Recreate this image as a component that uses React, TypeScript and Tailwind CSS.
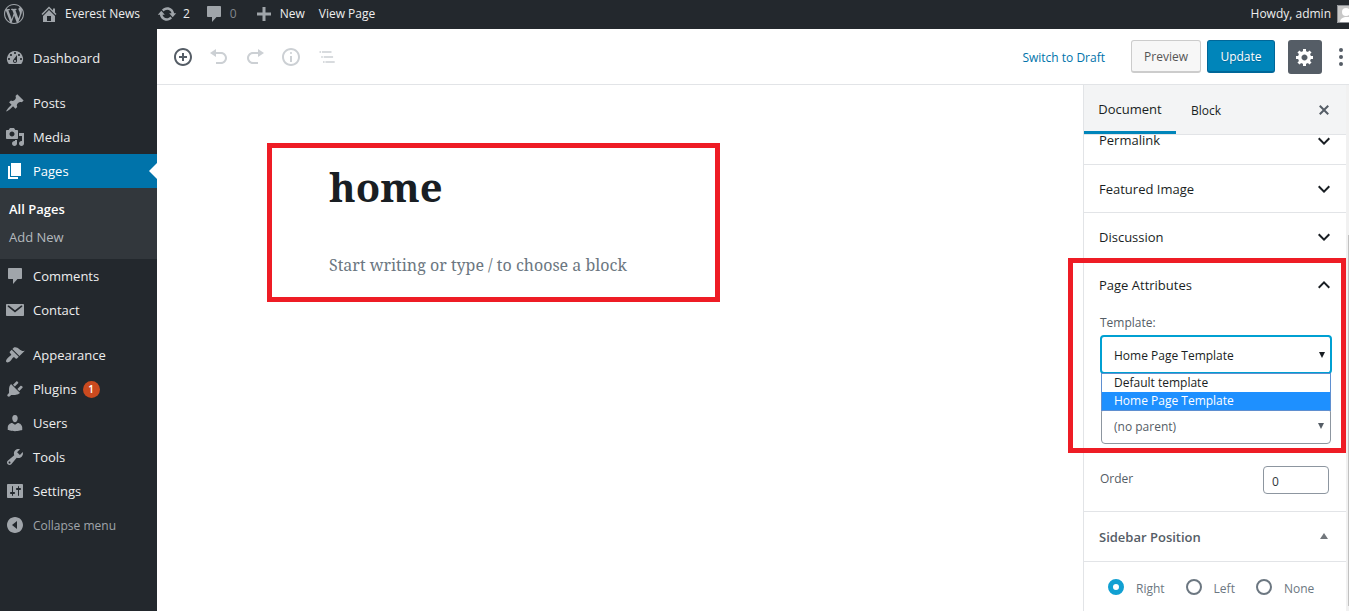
import type { ReactNode } from "react";
import clsx from "clsx";

const icons = {
  wordpress:
    "M20 10c0-5.51-4.49-10-10-10C4.48 0 0 4.49 0 10c0 5.52 4.48 10 10 10 5.51 0 10-4.48 10-10zM7.78 15.37L4.37 6.22c.55-.02 1.17-.08 1.17-.08.5-.06.44-1.13-.06-1.11 0 0-1.45.11-2.37.11-.18 0-.37 0-.58-.01C4.12 2.69 6.87 1.11 10 1.11c2.33 0 4.45.87 6.05 2.34-.68-.11-1.65.39-1.65 1.58 0 .74.45 1.36.9 2.1.35.61.55 1.36.55 2.46 0 1.49-1.4 5-1.4 5l-3.03-8.37c.54-.02.82-.17.82-.17.5-.05.44-1.25-.06-1.22 0 0-1.44.12-2.38.12-.87 0-2.33-.12-2.33-.12-.5-.03-.56 1.2-.06 1.22l.92.08 1.26 3.41zM17.41 10c.24-.64.74-1.87.43-4.25.7 1.29 1.05 2.71 1.05 4.25 0 3.29-1.73 6.24-4.4 7.78.97-2.59 1.94-5.2 2.92-7.78zM6.1 18.09C3.12 16.65 1.11 13.53 1.11 10c0-1.3.23-2.48.72-3.59C3.25 10.3 4.67 14.2 6.1 18.09zm4.03-6.63l2.58 6.98c-.86.29-1.76.45-2.71.45-.79 0-1.57-.11-2.29-.33.81-2.38 1.62-4.74 2.42-7.1z",
  home: "M16 8.5l1.53 1.53-1.06 1.06L10 4.6l-6.47 6.49-1.06-1.06L10 2.5l4 4v-2h2v4zm-6-2.46l6 5.99V18H4v-5.97zM12 17v-5H8v5h4z",
  update:
    "M10.2 3.28c3.53 0 6.43 2.61 6.92 6h2.08l-3.5 4-3.5-4h2.32c-.45-1.97-2.21-3.45-4.32-3.45-1.45 0-2.73.71-3.54 1.78L4.95 5.66C6.23 4.2 8.11 3.28 10.2 3.28zm-.4 13.44c-3.52 0-6.43-2.61-6.92-6H.8l3.5-4c1.17 1.33 2.33 2.67 3.5 4H5.48c.45 1.97 2.21 3.45 4.32 3.45 1.45 0 2.73-.71 3.54-1.78l1.71 1.95c-1.28 1.46-3.15 2.38-5.25 2.38z",
  comments:
    "M4 2h12c.55 0 1 .45 1 1v9c0 .55-.45 1-1 1h-3.5L8 18v-5H4c-.55 0-1-.45-1-1V3c0-.55.45-1 1-1z",
  plus: "M17 8.5v3h-5.5V17h-3v-5.5H3v-3h5.5V3h3v5.5H17z",
  dashboard:
    "M3.76 16h12.48A7.998 7.998 0 0 0 10 3a7.998 7.998 0 0 0-6.24 13zM10 4c.55 0 1 .45 1 1s-.45 1-1 1-1-.45-1-1 .45-1 1-1zM6 6c.55 0 1 .45 1 1s-.45 1-1 1-1-.45-1-1 .45-1 1-1zm8 0c.55 0 1 .45 1 1s-.45 1-1 1-1-.45-1-1 .45-1 1-1zm-5.37 5.55L12 7v6c0 1.1-.9 2-2 2s-2-.9-2-2c0-.57.24-1.08.63-1.45zM4 10c.55 0 1 .45 1 1s-.45 1-1 1-1-.45-1-1 .45-1 1-1zm12 0c.55 0 1 .45 1 1s-.45 1-1 1-1-.45-1-1 .45-1 1-1zm-5 3c0-.55-.45-1-1-1s-1 .45-1 1 .45 1 1 1 1-.45 1-1z",
  post: "M10.44 3.02l1.82-1.82 6.36 6.35-1.83 1.82c-1.05-.68-2.48-.57-3.41.36l-.75.75c-.92.93-1.04 2.35-.35 3.41l-1.83 1.82-2.41-2.41-2.8 2.79c-.42.42-3.38 2.71-3.8 2.29s1.86-3.39 2.28-3.81l2.79-2.79L4.1 9.36l1.83-1.82c1.05.69 2.48.57 3.4-.36l.75-.75c.93-.92 1.05-2.35.36-3.41z",
  media:
    "M13 11V4c0-.55-.45-1-1-1h-1.67L9 1H5L3.67 3H2c-.55 0-1 .45-1 1v7c0 .55.45 1 1 1h10c.55 0 1-.45 1-1zM7 4.5c1.38 0 2.5 1.12 2.5 2.5S8.38 9.5 7 9.5 4.5 8.38 4.5 7 5.62 4.5 7 4.5zM14 6h5v10.5c0 1.38-1.12 2.5-2.5 2.5S14 17.88 14 16.5s1.12-2.5 2.5-2.5c.17 0 .34.02.5.05V9h-3V6zm-4 8.05V13h2v3.5c0 1.38-1.12 2.5-2.5 2.5S7 17.88 7 16.5 8.12 14 9.5 14c.17 0 .34.02.5.05z",
  page: "M6 15V2h10v13H6zm-1 1h8v2H3V5h2v11z",
  email:
    "M2 4h16c.55 0 1 .45 1 1v10c0 .55-.45 1-1 1H2c-.55 0-1-.45-1-1V5c0-.55.45-1 1-1zm8 8.6l7.1-5.9c.3-.3.4-.7.1-1-.3-.4-.8-.4-1.1-.1L10 10.2 3.9 5.6c-.3-.3-.8-.3-1.1.1-.3.3-.2.7.1 1z",
  appearance:
    "M14.48 11.06L7.41 3.99l1.5-1.5c.5-.56 2.3-.47 3.51.32 1.21.8 1.43 1.28 2.91 2.1 1.18.64 2.45 1.26 4.45.85zm-.71.71L6.7 4.7 4.93 6.47c-.39.39-.39 1.02 0 1.41l1.06 1.06c.39.39.39 1.03 0 1.42-.6.6-1.43 1.11-2.21 1.69-.35.26-.7.53-1.01.84C1.43 14.23.4 16.08 1.4 17.07c.99 1 2.84-.03 4.18-1.36.31-.31.58-.66.85-1.02.57-.78 1.08-1.61 1.69-2.21.39-.39 1.02-.39 1.41 0l1.06 1.06c.39.39 1.02.39 1.41 0z",
  plugins:
    "M13.11 4.36L9.87 7.6 8 5.73l3.24-3.24c.35-.34 1.05-.2 1.56.32.52.51.66 1.21.31 1.55zm-8 1.77l.91-1.12 9.01 9.01-1.19.84c-.71.71-2.63 1.16-3.82 1.16H6.14L4.9 17.26c-.59.59-1.54.59-2.12 0-.59-.58-.59-1.53 0-2.12l1.24-1.24v-3.88c0-1.13.4-3.19 1.09-3.89zm7.26 3.97l3.24-3.24c.34-.35 1.04-.21 1.55.31.52.51.66 1.21.31 1.55l-3.24 3.25z",
  users:
    "M10 9.25c-2.27 0-2.73-3.44-2.73-3.44C7 4.02 7.82 2 9.97 2c2.16 0 2.98 2.02 2.71 3.81 0 0-.41 3.44-2.68 3.44zm0 2.57L12.72 10c2.39 0 4.52 2.33 4.52 4.53v2.49s-3.65 1.13-7.24 1.13c-3.65 0-7.24-1.13-7.24-1.13v-2.49c0-2.25 1.94-4.48 4.47-4.48z",
  tools:
    "M16.68 9.77c-1.34 1.34-3.3 1.67-4.95.99l-5.41 6.52c-.99.99-2.59.99-3.58 0s-.99-2.59 0-3.57l6.52-5.42c-.68-1.65-.35-3.61.99-4.95 1.28-1.28 3.12-1.62 4.72-1.06l-2.89 2.89 2.82 2.82 2.86-2.87c.53 1.58.18 3.39-1.08 4.65zM3.81 16.21c.4.39 1.04.39 1.43 0 .4-.4.4-1.04 0-1.43-.39-.4-1.03-.4-1.43 0-.39.39-.39 1.03 0 1.43z",
  settings:
    "M18 16V4c0-.55-.45-1-1-1H3c-.55 0-1 .45-1 1v12c0 .55.45 1 1 1h14c.55 0 1-.45 1-1zM8 11h1c.55 0 1 .45 1 1s-.45 1-1 1H8v1.5c0 .28-.22.5-.5.5s-.5-.22-.5-.5V13H6c-.55 0-1-.45-1-1s.45-1 1-1h1V5.5c0-.28.22-.5.5-.5s.5.22.5.5V11zm5-2h-1c-.55 0-1-.45-1-1s.45-1 1-1h1V5.5c0-.28.22-.5.5-.5s.5.22.5.5V7h1c.55 0 1 .45 1 1s-.45 1-1 1h-1v5.5c0 .28-.22.5-.5.5s-.5-.22-.5-.5V9z",
  collapse: "M10 2c4.42 0 8 3.58 8 8s-3.58 8-8 8-8-3.58-8-8 3.58-8 8-8zm2 12V6l-5 4z",
  insert:
    "M10 1c-5 0-9 4-9 9s4 9 9 9 9-4 9-9-4-9-9-9zm0 16c-3.9 0-7-3.1-7-7s3.1-7 7-7 7 3.1 7 7-3.1 7-7 7zm1-11H9v3H6v2h3v3h2v-3h3V9h-3V6z",
  undo: "M12 5H7V2L1 6l6 4V7h5c2.2 0 4 1.8 4 4s-1.8 4-4 4H7v2h5c3.3 0 6-2.7 6-6s-2.7-6-6-6z",
  redo: "M8 5h5V2l6 4-6 4V7H8c-2.2 0-4 1.8-4 4s1.8 4 4 4h5v2H8c-3.3 0-6-2.7-6-6s2.7-6 6-6z",
  info: "M9 15h2V9H9v6zm1-10c-.5 0-1 .5-1 1s.5 1 1 1 1-.5 1-1-.5-1-1-1zm0-4c-5 0-9 4-9 9s4 9 9 9 9-4 9-9-4-9-9-9zm0 16c-3.9 0-7-3.1-7-7s3.1-7 7-7 7 3.1 7 7-3.1 7-7 7z",
  outline:
    "M2.5 4.2h1.6v1.6H2.5zM5 4.2h9.5v1.6H5zM4.2 9.2h1.6v1.6H4.2zM6.7 9.2h9.4v1.6H6.7zM6 14.2h1.6v1.6H6zM8.4 14.2h9.3v1.6H8.4z",
  gear: "M18 12h-2.18c-.17.7-.44 1.35-.81 1.93l1.54 1.54-2.1 2.1-1.54-1.54c-.58.36-1.23.63-1.91.79V19H8v-2.18c-.68-.16-1.33-.43-1.91-.79l-1.54 1.54-2.12-2.12 1.54-1.54c-.36-.58-.63-1.23-.79-1.91H1V9.03h2.17c.16-.7.44-1.35.8-1.94L2.43 5.55l2.1-2.1 1.54 1.54c.58-.37 1.24-.64 1.93-.81V2h3v2.18c.68.16 1.33.43 1.91.79l1.54-1.54 2.12 2.12-1.54 1.54c.36.59.64 1.24.8 1.94H18V12zm-8.5 1.5c1.66 0 3-1.34 3-3s-1.34-3-3-3-3 1.34-3 3 1.34 3 3 3z",
  close:
    "M14.95 6.46L11.41 10l3.54 3.54-1.41 1.41L10 11.42l-3.53 3.53-1.42-1.42L8.58 10 5.05 6.47l1.42-1.42L10 8.58l3.54-3.53z",
  chevronDown: "M5.41 6.59L10 11.17l4.59-4.58L16 8l-6 6-6-6z",
  chevronUp: "M10 6l-6 6 1.41 1.41L10 8.83l4.59 4.58L16 12z",
};

type IconName = keyof typeof icons;

function Icon({ name, className = "" }: { name: IconName; className?: string }) {
  return (
    <svg
      viewBox="0 0 20 20"
      fill="currentColor"
      fillRule="evenodd"
      className={`size-5 shrink-0 ${className}`.trim()}
      aria-hidden
    >
      <path d={icons[name]} />
    </svg>
  );
}

function AdminBar() {
  return (
    <header className="flex h-[29px] items-center overflow-hidden bg-[#23282d] pb-[2px] pl-1 text-[12px] text-[#eee]">
      <a href="#about" aria-label="About WordPress" className="text-[#a0a5aa]">
        <Icon name="wordpress" />
      </a>
      <a href="#site" className="ml-[15px] flex items-center gap-[6px]">
        <Icon name="home" className="text-[#a0a5aa]" />
        Everest News
      </a>
      <a href="#updates" className="ml-[17px] flex items-center gap-[6px]">
        <Icon name="update" className="text-[#a0a5aa]" />2
      </a>
      <a href="#comments" className="ml-[14px] flex items-center gap-[6px] text-[#82878c]">
        <Icon name="comments" className="text-[#a0a5aa]" />0
      </a>
      <a href="#new" className="ml-[17px] flex items-center gap-[6px]">
        <Icon name="plus" className="text-[#a0a5aa]" />
        New
      </a>
      <a href="#view" className="ml-[14px]">
        View Page
      </a>
      <a href="#profile" className="ml-auto flex items-center gap-[6px]">
        Howdy, admin
        <svg viewBox="0 0 12 18" className="h-[18px] w-3" aria-hidden>
          <path fill="#c8c8c8" d="M0 0h12v18H0z" />
          <path fill="none" stroke="#8c8f94" d="M12 .5H.5v17H12" />
          <circle cx="9" cy="7" r="4" fill="#fff" />
          <path fill="#fff" d="M3 17c0-3 2-4 5-5h4v5z" />
        </svg>
      </a>
    </header>
  );
}

type MenuItemProps = { icon: IconName; label: string; badge?: string; current?: boolean };

function MenuItem({ icon, label, badge, current = false }: MenuItemProps) {
  return (
    <li className="relative">
      <a
        href={`#${label.toLowerCase()}`}
        className={clsx(
          "flex h-[34px] items-center gap-2 pl-[5px]",
          current ? "bg-[#0073aa] text-white" : "text-[#eee]",
        )}
      >
        <Icon name={icon} className={current ? "text-white" : "text-[#a0a5aa]"} />
        <span className="pt-[2px]">{label}</span>
        {badge && (
          <span className="-ml-[2px] flex size-[17px] items-center justify-center rounded-full bg-[#ca4a1f] text-[10px] font-semibold text-white">
            {badge}
          </span>
        )}
      </a>
      {current && (
        <span className="absolute top-[9px] right-0 border-y-8 border-r-8 border-y-transparent border-r-white" />
      )}
    </li>
  );
}

function AdminMenu() {
  return (
    <nav className="w-[157px] shrink-0 bg-[#23282d] pt-3 text-[13px]" aria-label="Main menu">
      <ul>
        <MenuItem icon="dashboard" label="Dashboard" />
        <li className="h-[11px]" />
        <MenuItem icon="post" label="Posts" />
        <MenuItem icon="media" label="Media" />
        <MenuItem icon="page" label="Pages" current />
        <li>
          <ul className="bg-[#32373c] pt-[7px] pb-2 pl-[9px] leading-7">
            <li>
              <a href="#all-pages" className="font-semibold text-white">
                All Pages
              </a>
            </li>
            <li>
              <a href="#add-new" className="text-[#b4b9be]">
                Add New
              </a>
            </li>
          </ul>
        </li>
        <MenuItem icon="comments" label="Comments" />
        <MenuItem icon="email" label="Contact" />
        <li className="h-[11px]" />
        <MenuItem icon="appearance" label="Appearance" />
        <MenuItem icon="plugins" label="Plugins" badge="1" />
        <MenuItem icon="users" label="Users" />
        <MenuItem icon="tools" label="Tools" />
        <MenuItem icon="settings" label="Settings" />
        <li>
          <button
            type="button"
            className="flex h-[34px] items-center gap-2 pl-[5px] text-[12px] text-[#a0a5aa]"
          >
            <Icon name="collapse" />
            <span className="pt-[2px]">Collapse menu</span>
          </button>
        </li>
      </ul>
    </nav>
  );
}

function ToolButton({ icon, label, disabled = false }: { icon: IconName; label: string; disabled?: boolean }) {
  return (
    <button
      type="button"
      aria-label={label}
      disabled={disabled}
      className={clsx("flex size-9 items-center justify-center", disabled ? "text-[#ccd0d4]" : "text-[#555d66]")}
    >
      <Icon name={icon} />
    </button>
  );
}

function EditorHeader() {
  return (
    <div className="flex h-14 items-center border-b border-[#e2e4e7] pl-2 text-[12px]">
      <ToolButton icon="insert" label="Add block" />
      <ToolButton icon="undo" label="Undo" disabled />
      <ToolButton icon="redo" label="Redo" disabled />
      <ToolButton icon="info" label="Content structure" disabled />
      <ToolButton icon="outline" label="Block navigation" disabled />
      <div className="ml-auto flex items-center">
        <button type="button" className="mr-[26px] pt-[2px] text-[#0073aa]">
          Switch to Draft
        </button>
        <button
          type="button"
          className="mr-[6px] h-[33px] w-[70px] rounded-[3px] border border-b-2 border-[#ccc] bg-[#f7f7f7] pt-[2px] text-[#555]"
        >
          Preview
        </button>
        <button
          type="button"
          className="mr-[13px] h-[33px] w-[68px] rounded-[3px] border border-b-2 border-[#006799] bg-[#0085ba] pt-[2px] text-white text-shadow-[0_1px_1px_#006799]"
        >
          Update
        </button>
        <button
          type="button"
          aria-label="Settings"
          aria-pressed
          className="mr-[11px] flex size-[34px] items-center justify-center rounded-[3px] bg-[#555d66] text-white"
        >
          <Icon name="gear" />
        </button>
        <button type="button" aria-label="More tools" className="text-[#555d66]">
          <svg viewBox="0 0 16 20" fill="currentColor" className="h-5 w-4" aria-hidden>
            <circle cx="8" cy="3" r="2" />
            <circle cx="8" cy="10" r="2" />
            <circle cx="8" cy="17" r="2" />
          </svg>
        </button>
      </div>
    </div>
  );
}

function Editor() {
  return (
    <main className="min-w-0 flex-1 pt-[58px] pl-[110px] text-[#191e23]">
      <div className="h-[159px] w-[453px] border-[5px] border-[#ee1c25] pl-[57px] font-['Noto_Serif','DejaVu_Serif_Condensed','DejaVu_Serif',serif]">
        <h1 className="pt-[15px] text-[40px] leading-[48px] font-bold">home</h1>
        <p className="pt-10 text-[16px] leading-7 text-[#6c7781]">
          Start writing or type / to choose a block
        </p>
      </div>
    </main>
  );
}

function PanelTitle({ title, open = false }: { title: string; open?: boolean }) {
  return (
    <button
      type="button"
      aria-expanded={open}
      className="flex h-[47px] w-full items-center justify-between pr-3 pl-[15px] text-[13px] text-[#191e23]"
    >
      <span className="pt-[2px]">{title}</span>
      <Icon name={open ? "chevronUp" : "chevronDown"} />
    </button>
  );
}

function Panel({ children }: { children: ReactNode }) {
  return <section className="border-b border-[#e2e4e7]">{children}</section>;
}

function SelectArrow() {
  return (
    <svg viewBox="0 0 8 6" fill="currentColor" className="pointer-events-none absolute right-[6px] h-[6px] w-2" aria-hidden>
      <path d="M1 0h6L4 6z" />
    </svg>
  );
}

function PageAttributes() {
  return (
    <section className="relative border-b border-[#e2e4e7] pb-[17px]">
      <PanelTitle title="Page Attributes" open />
      <div className="pr-[14px] pl-4 text-[12px] text-[#555d66]">
        <label htmlFor="template" className="block pt-[5px] leading-5">
          Template:
        </label>
        <div className="relative mt-[2px] flex h-[39px] items-center text-[#191e23]">
          <select
            id="template"
            defaultValue="home"
            className="size-full appearance-none rounded-[4px] border-2 border-[#00a0d2] bg-white pt-[2px] pl-3"
          >
            <option value="default">Default template</option>
            <option value="home">Home Page Template</option>
          </select>
          <SelectArrow />
          <ul
            role="listbox"
            aria-label="Template"
            className="absolute inset-x-px top-full z-10 -mt-px border border-[#5f8fd0] bg-white leading-[18px]"
          >
            <li role="option" aria-selected={false} className="pl-3">
              Default template
            </li>
            <li role="option" aria-selected className="bg-[#1e90ff] pl-3 text-white">
              Home Page Template
            </li>
          </ul>
        </div>
        <div className="relative mx-px mt-[34px] flex h-9 items-center">
          <select
            aria-label="Parent Page"
            className="size-full appearance-none rounded-[4px] border border-[#8d96a0] bg-white pt-[2px] pl-3"
          >
            <option>(no parent)</option>
          </select>
          <SelectArrow />
        </div>
        <div className="mt-[22px] flex items-start justify-between pr-[3px]">
          <label htmlFor="order" className="pt-[3px] leading-5">
            Order
          </label>
          <input
            id="order"
            type="text"
            defaultValue="0"
            className="h-7 w-[66px] rounded-[4px] border border-[#8d96a0] px-2 pt-[2px] text-[#32373c]"
          />
        </div>
      </div>
      {/* Highlight frame */}
      <div className="pointer-events-none absolute -top-[3px] right-0 -left-4 z-20 h-[195px] border-[5px] border-[#ee1c25]" />
    </section>
  );
}

function PositionOption({ label, checked = false }: { label: string; checked?: boolean }) {
  return (
    <label className="flex items-center gap-3">
      <input
        type="radio"
        name="sidebar-position"
        defaultChecked={checked}
        className="size-4 appearance-none rounded-full border-2 border-[#6c7781] checked:border-[5px] checked:border-[#11a0d2]"
      />
      <span className="pt-1">{label}</span>
    </label>
  );
}

function SettingsSidebar() {
  return (
    <aside className="flex w-[266px] shrink-0 border-l border-[#e2e4e7] text-[12px]">
      <div className="min-w-0 flex-1">
        <div className="flex h-[50px] items-stretch border-b border-[#e2e4e7] bg-[#f3f4f5] text-[#191e23]">
          <button type="button" className="w-[92px] border-b-3 border-[#0085ba] pt-1 text-[13px]">
            Document
          </button>
          <button type="button" className="px-[15px] pt-[2px]">
            Block
          </button>
          <button type="button" aria-label="Close settings" className="mr-3 ml-auto text-[#555d66]">
            <Icon name="close" />
          </button>
        </div>
        <Panel>
          <button
            type="button"
            className="flex h-[29px] w-full items-center justify-between pr-3 pb-[17px] pl-[15px] text-[13px] text-[#191e23]"
          >
            Permalink
            <Icon name="chevronDown" />
          </button>
        </Panel>
        <Panel>
          <PanelTitle title="Featured Image" />
        </Panel>
        <Panel>
          <PanelTitle title="Discussion" />
        </Panel>
        <PageAttributes />
        <Panel>
          <button
            type="button"
            className="flex h-[49px] w-full items-center justify-between pr-[18px] pl-[15px] text-[13px] font-semibold text-[#555d66]"
          >
            <span className="pt-[2px]">Sidebar Position</span>
            <svg viewBox="0 0 8 8" fill="#72777c" className="size-2" aria-hidden>
              <path d="M0 6h8L4 0z" />
            </svg>
          </button>
        </Panel>
        <div
          role="radiogroup"
          aria-label="Sidebar Position"
          className="flex gap-[21px] pt-[14px] pl-6 text-[#6c7781]"
        >
          <PositionOption label="Right" checked />
          <PositionOption label="Left" />
          <PositionOption label="None" />
        </div>
      </div>
      {/* Scrollbar gutter */}
      <div className="w-[3px] bg-[#f1f1f1] pt-[150px] pl-[2px]">
        <div className="h-[371px] bg-[#c1c1c1]" />
      </div>
    </aside>
  );
}

export default function App() {
  return (
    <div className="flex min-h-screen flex-col bg-white font-['Segoe_UI','Open_Sans',sans-serif]">
      <AdminBar />
      <div className="flex flex-1">
        <AdminMenu />
        <div className="flex min-w-0 flex-1 flex-col">
          <EditorHeader />
          <div className="flex flex-1">
            <Editor />
            <SettingsSidebar />
          </div>
        </div>
      </div>
    </div>
  );
}
